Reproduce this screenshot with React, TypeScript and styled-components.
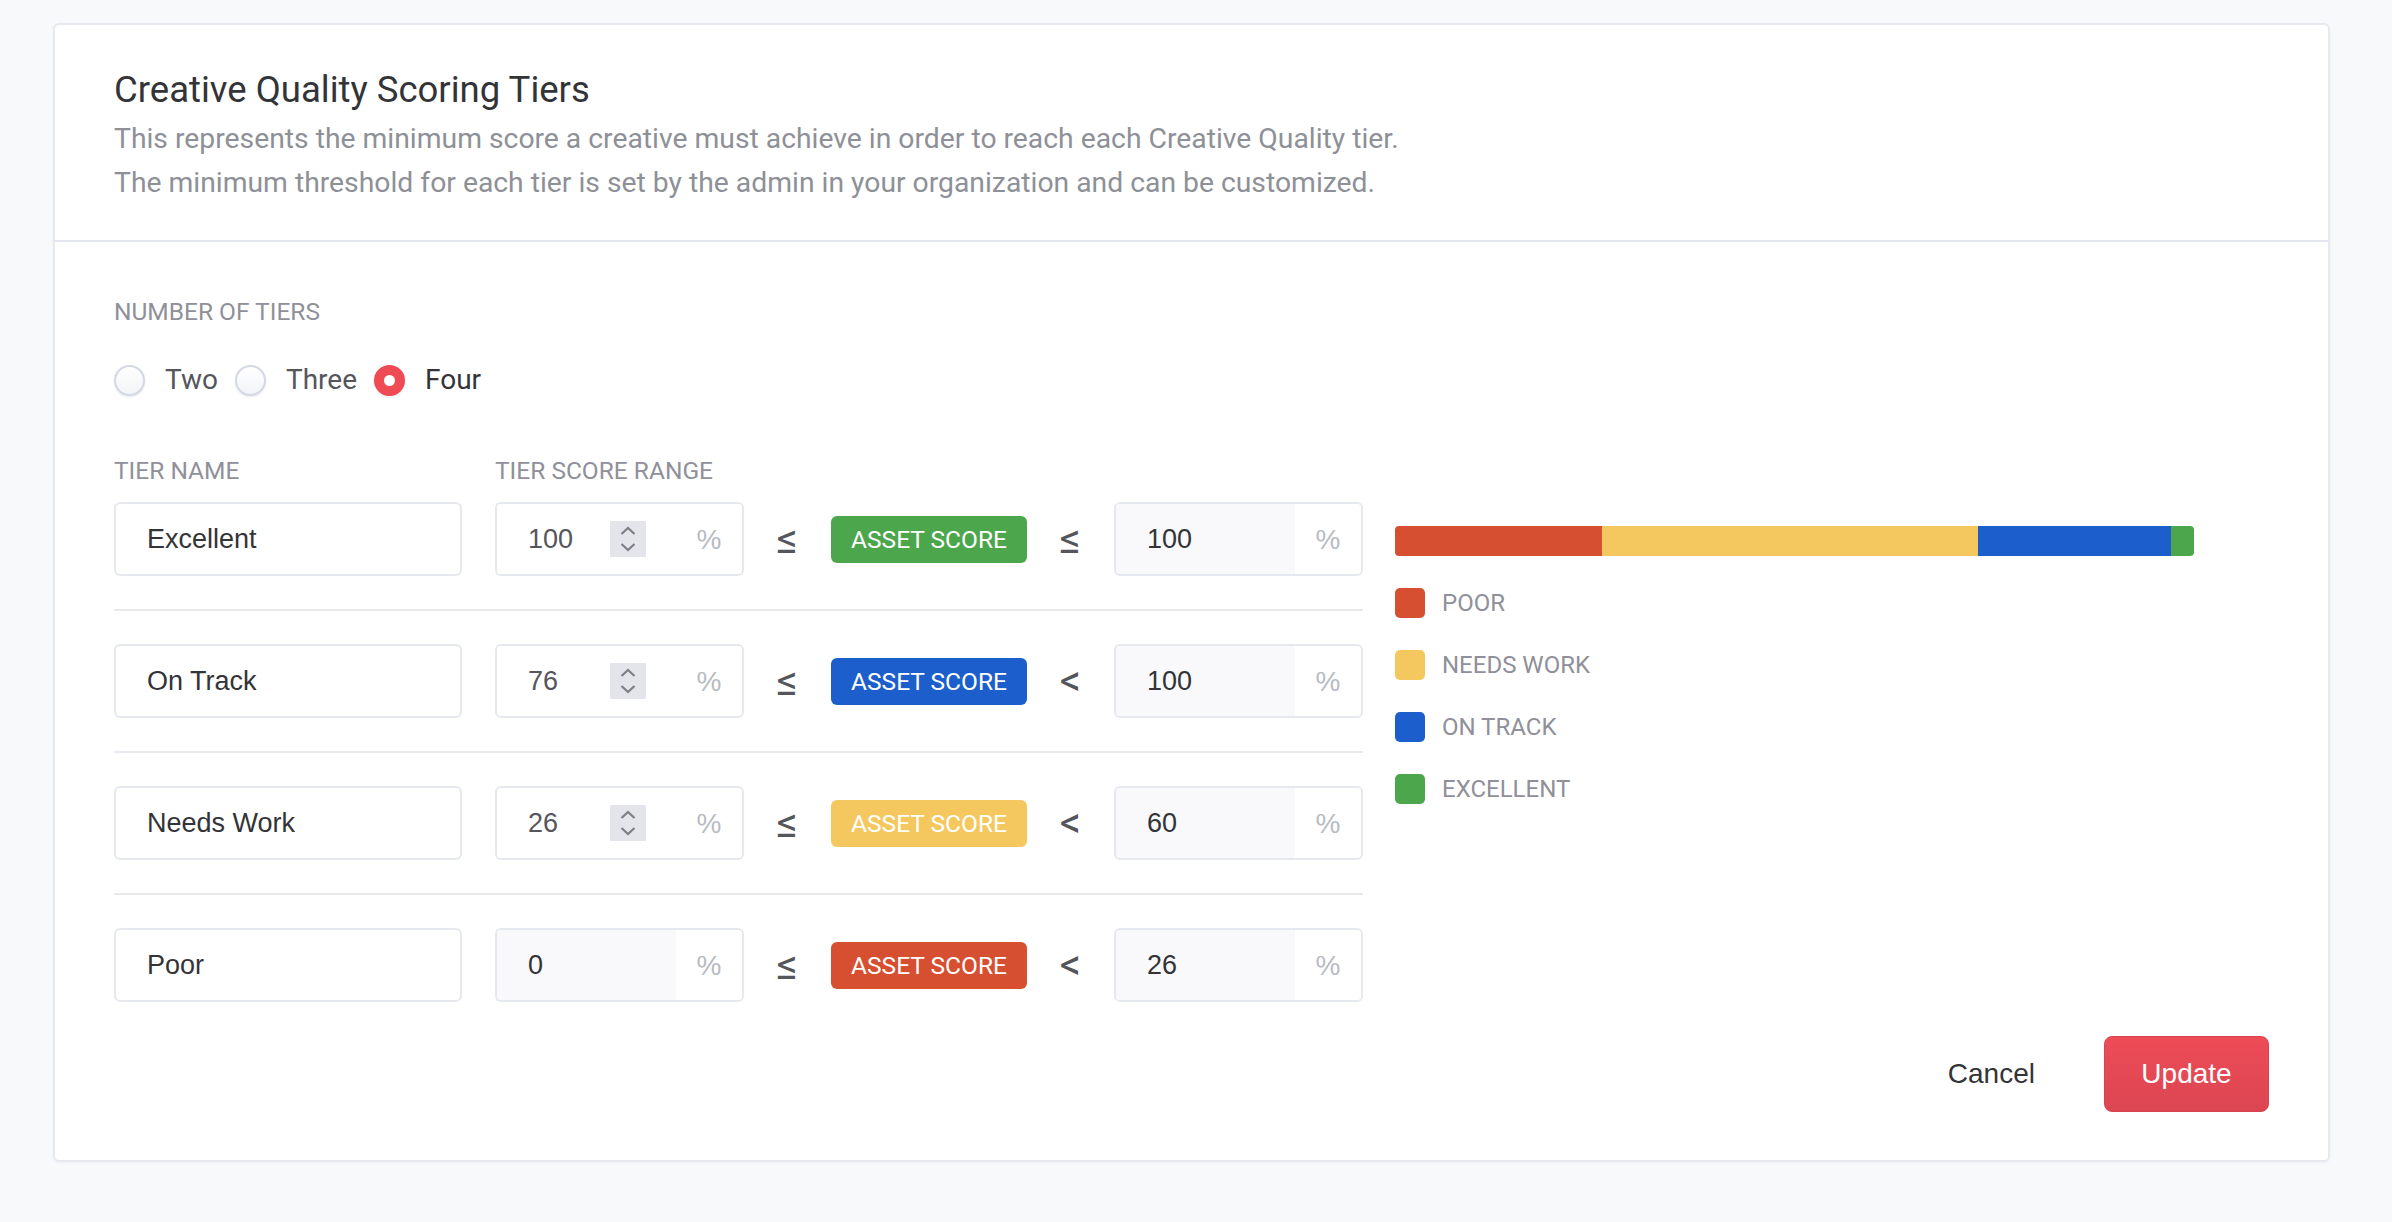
import React from "react";
import styled, { createGlobalStyle } from "styled-components";

const GlobalStyle = createGlobalStyle`
  body {
    margin: 0;
    background: #f8f9fb;
    font-family: Roboto, "Liberation Sans", sans-serif;
  }
`;

interface Tier {
  name: string;
  min: string;
  max: string;
  op: string;
  color: string;
  locked?: boolean;
}

const tiers: Tier[] = [
  { name: "Excellent", min: "100", max: "100", op: "≤", color: "#4ca64c" },
  { name: "On Track", min: "76", max: "100", op: "<", color: "#1c5fcc" },
  { name: "Needs Work", min: "26", max: "60", op: "<", color: "#f5c85f" },
  { name: "Poor", min: "0", max: "26", op: "<", color: "#d64f31", locked: true }
];

const segments = [
  { label: "POOR", color: "#d64f31", share: 25.9 },
  { label: "NEEDS WORK", color: "#f5c85f", share: 47.1 },
  { label: "ON TRACK", color: "#1c5fcc", share: 24.1 },
  { label: "EXCELLENT", color: "#4ca64c", share: 2.9 }
];

const options = ["Two", "Three", "Four"];

const Spinner: React.FC = () => (
  <SpinBox>
    <svg width="36" height="36" viewBox="0 0 36 36" fill="none">
      <path d="M11.5 13L18 7L24.5 13" stroke="#7d7f88" strokeWidth="2.2" />
      <path d="M11.5 23L18 29L24.5 23" stroke="#7d7f88" strokeWidth="2.2" />
    </svg>
  </SpinBox>
);

const App: React.FC = () => {
  return (
    <Page>
      <GlobalStyle />
      <Card>
        <Header>
          <Title>Creative Quality Scoring Tiers</Title>
          <Description>
            This represents the minimum score a creative must achieve in order to reach each Creative Quality tier.
            <br />
            The minimum threshold for each tier is set by the admin in your organization and can be customized.
          </Description>
        </Header>
        <Body>
          <Label>Number of tiers</Label>
          <RadioGroup>
            {options.map(opt => (
              <RadioOption key={opt}>
                <Radio $checked={opt === "Four"} />
                <RadioText $checked={opt === "Four"}>{opt}</RadioText>
              </RadioOption>
            ))}
          </RadioGroup>

          <Main>
            <TierTable>
              <LabelRow>
                <Label>Tier name</Label>
                <Label>Tier score range</Label>
              </LabelRow>
              {tiers.map((tier, i) => (
                <React.Fragment key={tier.name}>
                  {i > 0 && <Divider />}
                  <TierRow>
                    <NameInput>{tier.name}</NameInput>
                    <NumberGroup>
                      <NumberField $locked={tier.locked} $muted={!tier.locked}>
                        {tier.min}
                        {!tier.locked && <Spinner />}
                      </NumberField>
                      <Addon>%</Addon>
                    </NumberGroup>
                    <Operator>≤</Operator>
                    <Badge $color={tier.color}>Asset Score</Badge>
                    <Operator>{tier.op}</Operator>
                    <NumberGroup>
                      <NumberField $locked>{tier.max}</NumberField>
                      <Addon>%</Addon>
                    </NumberGroup>
                  </TierRow>
                </React.Fragment>
              ))}
            </TierTable>

            <Chart>
              <Bar>
                {segments.map(s => (
                  <Segment key={s.label} $color={s.color} style={{ width: `${s.share}%` }} />
                ))}
              </Bar>
              <Legend>
                {segments.map(s => (
                  <LegendItem key={s.label}>
                    <Swatch $color={s.color} />
                    {s.label}
                  </LegendItem>
                ))}
              </Legend>
            </Chart>
          </Main>

          <Footer>
            <CancelButton>Cancel</CancelButton>
            <PrimaryButton>Update</PrimaryButton>
          </Footer>
        </Body>
      </Card>
    </Page>
  );
};

export default App;

const Page = styled.div`
  padding: 23px 62px 60px 53px;
`;

const Card = styled.div`
  background: #fff;
  border: 2px solid #e6e9f0;
  border-radius: 6px;
  box-shadow: 0 1px 3px rgba(30, 40, 80, 0.04);
`;

const Header = styled.div`
  padding: 43px 59px 35px;
  border-bottom: 2px solid #e3e6ee;
`;

const Title = styled.h1`
  margin: 0 0 6px;
  font-size: 36.5px;
  line-height: 43px;
  font-weight: 400;
  color: #333438;
`;

const Description = styled.p`
  margin: 0;
  font-size: 28.3px;
  line-height: 44px;
  color: #8e9097;
`;

const Body = styled.div`
  padding: 56px 59px 48px 59px;
`;

const Label = styled.div`
  font-size: 24.5px;
  line-height: 28px;
  color: #8f9099;
  text-transform: uppercase;
`;

const RadioGroup = styled.div`
  display: flex;
  align-items: center;
  gap: 17px;
  margin-top: 38px;
`;

const RadioOption = styled.label`
  display: flex;
  align-items: center;
  gap: 20px;
`;

const Radio = styled.span<{ $checked: boolean }>`
  position: relative;
  width: 31px;
  height: 31px;
  box-sizing: border-box;
  border-radius: 50%;
  border: 2px solid ${p => (p.$checked ? "#ef4b55" : "#d3d8e4")};
  background: ${p => (p.$checked ? "#ef4b55" : "linear-gradient(#ffffff, #f2f4f8)")};
  box-shadow: 0 1px 2px rgba(40, 50, 90, 0.12);

  &::after {
    content: "";
    display: ${p => (p.$checked ? "block" : "none")};
    position: absolute;
    left: 50%;
    top: 50%;
    width: 11px;
    height: 11px;
    margin: -5.5px 0 0 -5.5px;
    border-radius: 50%;
    background: #fff;
  }
`;

const RadioText = styled.span<{ $checked: boolean }>`
  font-size: 28px;
  line-height: 32px;
  color: ${p => (p.$checked ? "#333438" : "#55565c")};
`;

const Main = styled.div`
  display: flex;
  align-items: flex-start;
  gap: 32px;
  margin-top: 61px;
`;

const TierTable = styled.div`
  width: 1249px;
`;

const LabelRow = styled.div`
  display: grid;
  grid-template-columns: 348px 1fr;
  column-gap: 33px;
  margin-bottom: 17px;
`;

const TierRow = styled.div`
  display: flex;
  align-items: center;
  gap: 33px;
`;

const Divider = styled.div`
  height: 2px;
  background: #e7e9ef;
  margin: 33px 0;
`;

const NameInput = styled.div`
  width: 348px;
  height: 74px;
  box-sizing: border-box;
  display: flex;
  align-items: center;
  padding-left: 31px;
  border: 2px solid #e5e8ef;
  border-radius: 6px;
  font-family: "Liberation Sans", Arial, sans-serif;
  font-size: 27px;
  color: #333438;
`;

const NumberGroup = styled.div`
  width: 249px;
  height: 74px;
  box-sizing: border-box;
  display: flex;
  border: 2px solid #e5e8ef;
  border-radius: 6px;
  overflow: hidden;
  flex-shrink: 0;
`;

const NumberField = styled.div<{ $locked?: boolean; $muted?: boolean }>`
  flex: 1;
  display: flex;
  align-items: center;
  justify-content: space-between;
  padding: 0 30px 0 31px;
  background: ${p => (p.$locked ? "#f9f9fb" : "#fff")};
  font-family: "Liberation Sans", Arial, sans-serif;
  font-size: 27px;
  color: ${p => (p.$muted ? "#55565c" : "#333438")};
`;

const SpinBox = styled.span`
  display: block;
  width: 36px;
  height: 36px;
  background: #e4e5ea;

  svg {
    display: block;
  }
`;

const Addon = styled.div`
  width: 66px;
  display: flex;
  align-items: center;
  justify-content: center;
  background: #fff;
  font-family: "Liberation Sans", Arial, sans-serif;
  font-size: 28px;
  color: #b8bbc3;
  padding-top: 2px;
`;

const Operator = styled.span`
  width: 21px;
  display: flex;
  justify-content: center;
  font-size: 42px;
  line-height: 42px;
  color: #55565c;
  flex-shrink: 0;
`;

const Badge = styled.span<{ $color: string }>`
  width: 196px;
  height: 47px;
  display: flex;
  align-items: center;
  justify-content: center;
  flex-shrink: 0;
  border-radius: 6px;
  background: ${p => p.$color};
  color: #fff;
  font-size: 24.5px;
  text-transform: uppercase;
`;

const Chart = styled.div`
  width: 799px;
  margin-top: 69px;
`;

const Bar = styled.div`
  display: flex;
  height: 30px;
  border-radius: 4px;
  overflow: hidden;
`;

const Segment = styled.div<{ $color: string }>`
  height: 100%;
  background: ${p => p.$color};
`;

const Legend = styled.div`
  display: flex;
  flex-direction: column;
  gap: 32px;
  margin-top: 32px;
`;

const LegendItem = styled.div`
  display: flex;
  align-items: center;
  gap: 17px;
  font-size: 24px;
  color: #8f9099;
`;

const Swatch = styled.span<{ $color: string }>`
  width: 30px;
  height: 30px;
  border-radius: 5px;
  background: ${p => p.$color};
`;

const Footer = styled.div`
  display: flex;
  justify-content: flex-end;
  align-items: center;
  gap: 69px;
  margin-top: 34px;
`;

const CancelButton = styled.button`
  border: none;
  background: none;
  padding: 0;
  font-family: "Liberation Sans", Arial, sans-serif;
  font-size: 28px;
  color: #333438;
  cursor: pointer;
`;

const PrimaryButton = styled.button`
  width: 165px;
  height: 76px;
  border: 1px solid #d9434f;
  border-radius: 8px;
  background: linear-gradient(#ee4c57, #db4652);
  color: #fff;
  font-family: "Liberation Sans", Arial, sans-serif;
  font-size: 28px;
  cursor: pointer;
`;
